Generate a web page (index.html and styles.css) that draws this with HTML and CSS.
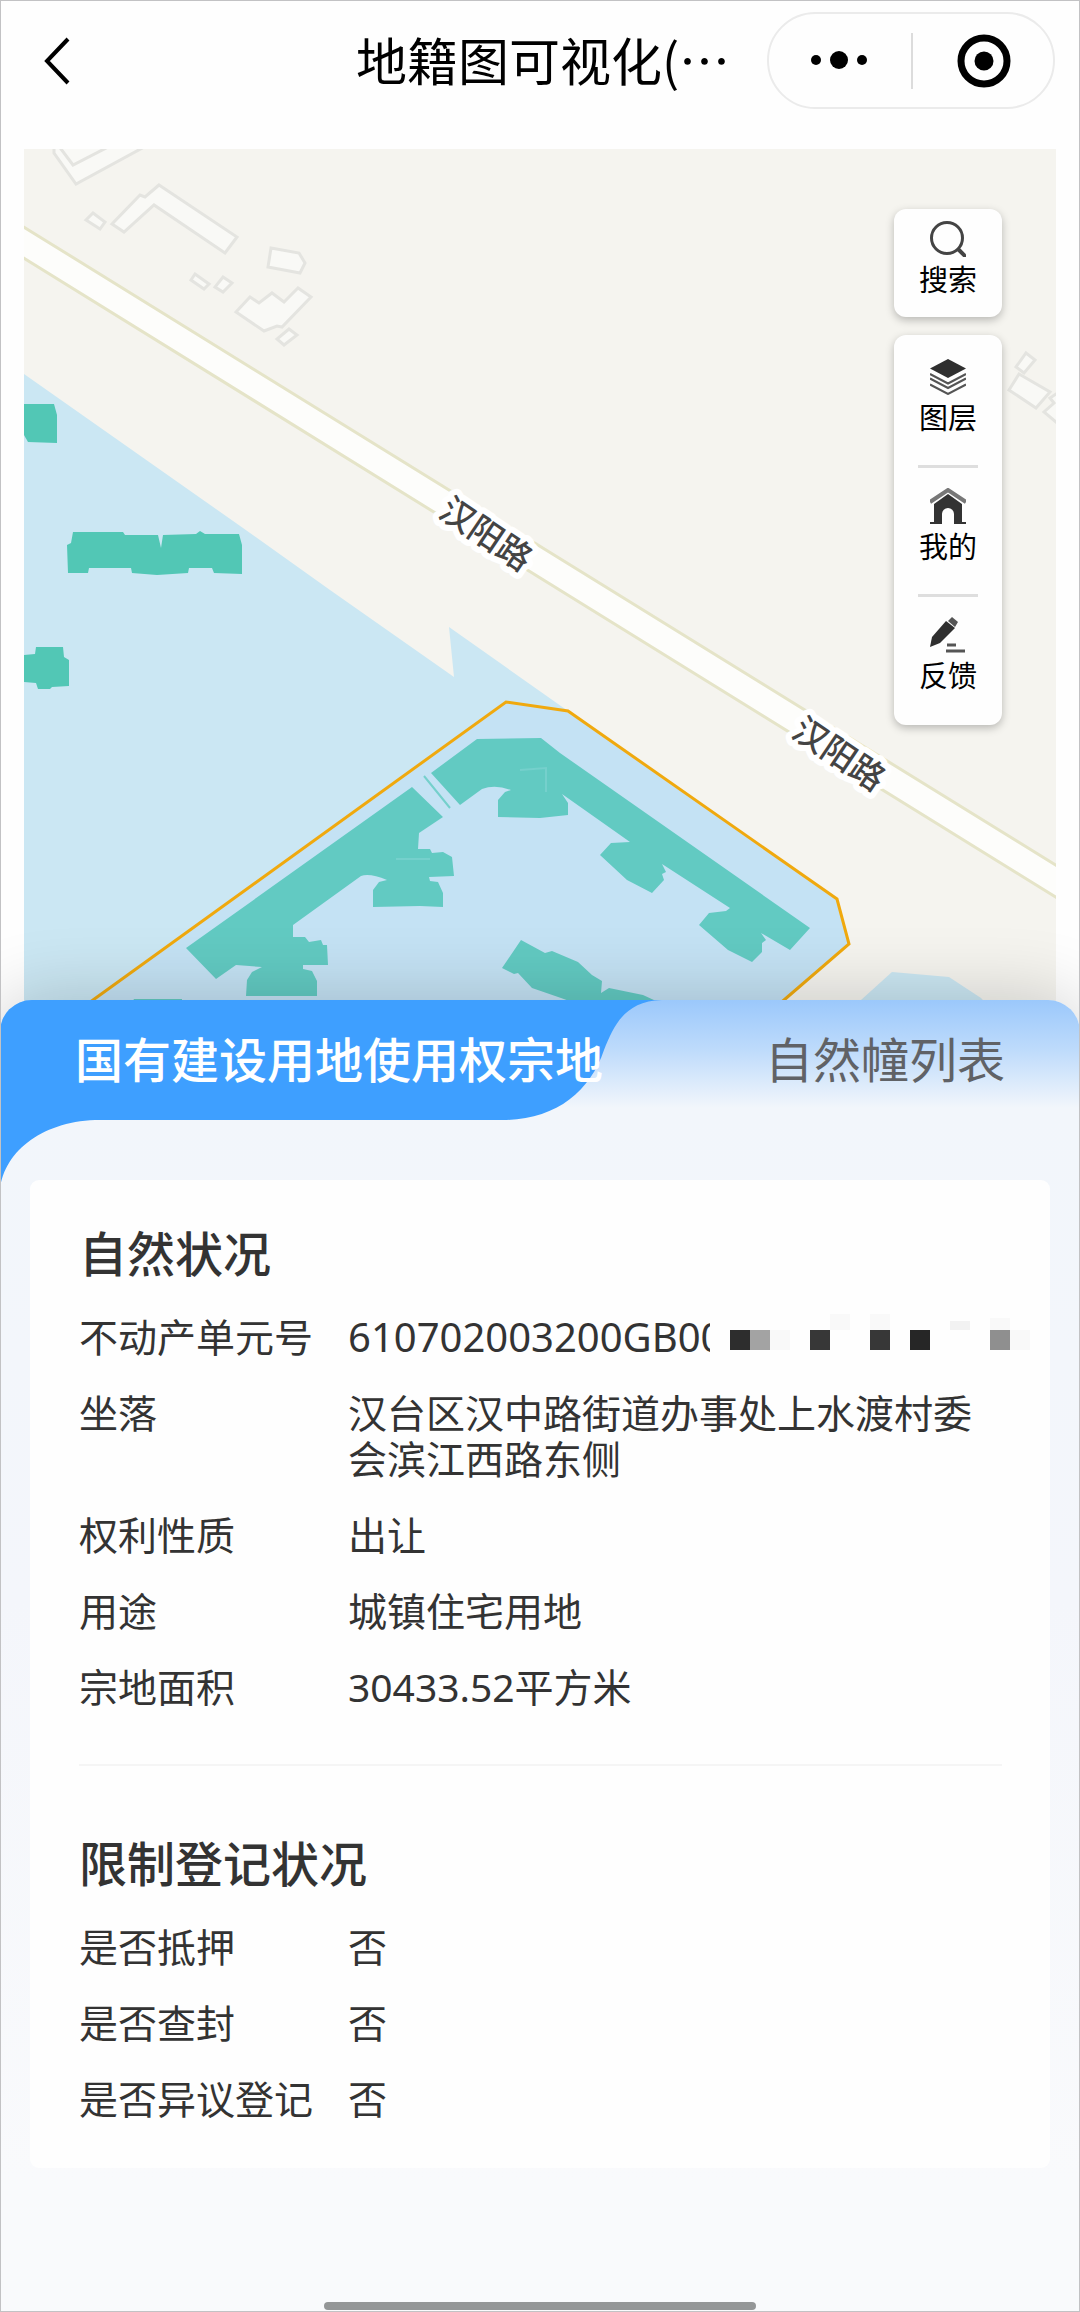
FILE: index.html
```html
<!DOCTYPE html>
<html lang="zh-CN">
<head>
<meta charset="utf-8">
<meta name="viewport" content="width=device-width, initial-scale=1">
<title>地籍图可视化</title>
<link rel="stylesheet" href="styles.css">
</head>
<body>
<div class="app">
  <header class="navbar">
    <button class="back" type="button" aria-label="返回">
      <svg width="28" height="50" viewBox="0 0 28 50"><path d="M25 3 4 25l21 22" fill="none" stroke="#000" stroke-width="4"/></svg>
    </button>
    <h1 class="title">地籍图可视化(…</h1>
    <div class="capsule">
      <button type="button" aria-label="更多">
        <svg width="60" height="60" viewBox="0 0 60 60"><circle cx="6" cy="29" r="5"/><circle cx="29" cy="29" r="9"/><circle cx="52" cy="29" r="5"/></svg>
      </button>
      <button type="button" aria-label="关闭">
        <svg width="60" height="60" viewBox="0 0 60 60"><circle cx="32" cy="30" r="23" fill="none" stroke="#000" stroke-width="7"/><circle cx="32" cy="30" r="9.5"/></svg>
      </button>
    </div>
  </header>

  <main class="content">
    <section class="map" aria-label="地图">
      <svg class="map-canvas" viewBox="24 149 1032 891">
        <rect class="land" x="24" y="149" width="1032" height="891"/>
        <g class="outline">
          <path d="M54 145 54 153 76 184 146 146M58 145 73 165 112 145"/>
          <path d="M159 185 237 237 225 253 154 205 124 232 112 224 140 195 145 197Z"/>
          <path d="M93 213 105 222 100 229 86 220Z"/>
          <path d="M271 248 299 253 305 263 300 273 268 267Z"/>
          <path d="M195 274 209 284 204 289 191 280Z"/>
          <path d="M223 277 232 283 223 292 215 287Z"/>
          <path d="M250 297 259 303 272 293 284 302 298 288 311 297 282 327 277 326 264 331 236 312Z"/>
          <path d="M289 329 297 335 284 345 277 339Z"/>
          <path d="M1026 353 1035 360 1024 373 1016 367Z"/>
          <path d="M1019 374 1050 392 1036 408 1009 390Z"/>
          <path d="M1062 390 1050 398 1054 403 1044 412 1062 427Z"/>
        </g>
        <path class="road" d="M14 221 1070 874V906L14 252Z"/>
        <path class="block" d="M24 374 243 528 330 590 454 677 449 627 568 711 506 702 93 1000 40 1040H24Z"/>
        <path class="block" d="M832 1030 861 1000 892 972 949 977 981 998 1010 1030Z"/>
        <path class="parcel" d="M38 1040 93 1000 506 702 568 711 837 899 849 944 784 1000 738 1040Z"/>
        <g class="building">
          <path d="M24 404H54L57 415V443L28 442 24 435Z"/>
          <path d="M73 532H123L125 535H158L161 548 163 535 196 534 200 531 205 534H239L242 545V574L214 573 212 568H189L188 573 157 575 132 573 131 568H89L88 573H68L67 545 71 543Z"/>
          <path d="M24 655 35 654 36 647H63L64 657 69 660V686L52 687 50 689H38L36 683 24 682Z"/>
        </g>
        <g class="building selected">
          <path d="M412 787 443 817 419 833 418 849H430L432 853 443 852 452 857 454 876 429 877 430 881 438 882 443 893V907L420 906 373 907V890L379 882 387 880 Q370 873 361 876L293 925V937H305L309 942 321 940 323 945H327L328 965H303V969L312 971 317 981V996H246L247 980 252 972 262 967 236 965 216 979 186 948Z"/>
          <path d="M431 773 477 739 541 738 560 753 810 928 790 950 761 933 766 940 762 943V952L752 962 728 950 699 925 709 913 726 911 730 908 662 864 666 872 662 874 664 880 652 893 627 880 600 855 611 843 630 842 562 794 568 803V815L540 818 498 817V800L505 792 511 790 Q495 784 482 789L460 805Z"/>
          <path d="M502 968 521 940 545 953 552 951 578 962 592 975 602 981 601 993 609 988 643 995 680 1012 600 1012 561 998 532 988 518 973 514 974Z"/>
          <path d="M128 1010 134 999H182V1010Z"/>
        </g>
        <path class="crease" d="M520 770 546 768V792M396 859H430M424 776 450 808"/>
        <text class="road-name" transform="translate(486 534) rotate(34)" dy="12">汉阳路</text>
        <text class="road-name" transform="translate(839 754) rotate(34)" dy="12">汉阳路</text>
      </svg>

      <div class="tools">
        <div class="tool-group compact">
          <button class="tool" type="button">
            <svg width="36" height="36" viewBox="0 0 36 36"><circle cx="17" cy="17" r="15.500" fill="none" stroke="#444" stroke-width="3"/><path d="M28 28l8 8" stroke="#444" stroke-width="4"/></svg>
            <span>搜索</span>
          </button>
        </div>
        <div class="tool-group">
          <button class="tool" type="button">
            <svg width="36" height="36" viewBox="0 0 36 36"><path d="M18 0 36 9.500 18 19 0 9.500Z" fill="#2f2f2f"/><path d="M0 15 18 24.500 36 15M0 19.500 18 29 36 19.500M0 25.500 18 35 36 25.500" fill="none" stroke="#555" stroke-width="2"/></svg>
            <span>图层</span>
          </button>
          <button class="tool" type="button">
            <svg width="36" height="36" viewBox="0 0 36 36"><path d="M0 14 18 2 36 14" fill="none" stroke="#777" stroke-width="4"/><path d="M18 6 32 16V34H36V36H24V26a6 6 0 0 0-12 0V36H0V34H4V16Z" fill="#333"/></svg>
            <span>我的</span>
          </button>
          <button class="tool" type="button">
            <svg width="36" height="36" viewBox="0 0 36 36"><path d="M0 30 2 20 16 4 25 11 10 26Z" fill="#2f2f2f"/><path d="M18 4 22 0 28 5 25 10Z" fill="#555"/><path d="M17 28H26M16 34H35" stroke="#555" stroke-width="3"/></svg>
            <span>反馈</span>
          </button>
        </div>
      </div>
    </section>

    <section class="panel">
      <svg class="tab-shape" viewBox="0 0 1080 190" preserveAspectRatio="none" aria-hidden="true">
        <path d="M0 0H662C625 1 614 25 604 50C590 92 555 120 503 120H100C45 120 4 150 0 190Z" fill="#3e9fff"/>
      </svg>
      <div class="tabs" role="tablist">
        <button class="tab active" type="button" role="tab" aria-selected="true">国有建设用地使用权宗地</button>
        <button class="tab" type="button" role="tab" aria-selected="false">自然幢列表</button>
      </div>

      <div class="card">
        <section class="group">
          <h2>自然状况</h2>
          <dl>
            <div class="row"><dt>不动产单元号</dt><dd class="masked"><span class="masked-text">610702003200GB00</span><svg class="mosaic" width="320" height="46" viewBox="0 0 320 46" aria-hidden="true">
              <path fill="#fefefe" d="M0 0h320v46h-320z"/>
              <path fill="#2d2d2d" d="M20 16h20v20h-20z"/>
              <path fill="#a3a3a3" d="M40 16h20v20h-20z"/>
              <path fill="#f9f9f9" d="M60 16h20v20h-20zM300 16h20v20h-20zM120 0h20v16h-20zM160 0h20v16h-20zM280 4h20v12h-20z"/>
              <path fill="#373737" d="M100 16h20v20h-20zM160 16h20v20h-20z"/>
              <path fill="#262626" d="M200 16h20v20h-20z"/>
              <path fill="#f2f2f2" d="M240 7h20v9h-20z"/>
              <path fill="#8f8f8f" d="M280 16h20v20h-20z"/>
            </svg></dd></div>
            <div class="row"><dt>坐落</dt><dd>汉台区汉中路街道办事处上水渡村委会滨江西路东侧</dd></div>
            <div class="row"><dt>权利性质</dt><dd>出让</dd></div>
            <div class="row"><dt>用途</dt><dd>城镇住宅用地</dd></div>
            <div class="row"><dt>宗地面积</dt><dd>30433.52平方米</dd></div>
          </dl>
        </section>
        <section class="group">
          <h2>限制登记状况</h2>
          <dl>
            <div class="row"><dt>是否抵押</dt><dd>否</dd></div>
            <div class="row"><dt>是否查封</dt><dd>否</dd></div>
            <div class="row"><dt>是否异议登记</dt><dd>否</dd></div>
          </dl>
        </section>
      </div>
      <div class="home-indicator"></div>
    </section>
  </main>
</div>
</body>
</html>
```
FILE: styles.css
```css
* {
  box-sizing: border-box;
}

body {
  margin: 0;
  background: #fefefe;
  color: #333;
  font-family: "Noto Sans", "Noto Sans CJK SC", sans-serif;
}

button {
  margin: 0;
  padding: 0;
  border: 0;
  background: none;
  color: inherit;
  font: inherit;
  cursor: pointer;
}

svg {
  display: block;
}

h1, h2, dl, dd {
  margin: 0;
}

.app {
  display: flex;
  flex-direction: column;
  min-height: 100vh;
}

/* thin frame round the whole screen */
.app::after {
  content: "";
  position: absolute;
  inset: 0;
  z-index: 3;
  border: 1px solid #c2c2c4;
  pointer-events: none;
}

/* navigation bar */
.navbar {
  display: grid;
  grid-template-columns: 1fr auto 1fr;
  align-items: center;
  padding: 12px 25px 40px 31px;
}

.navbar .back {
  justify-self: start;
  padding: 0 12px;
}

.title {
  padding-bottom: 4px;
  color: #000;
  font-family: "Noto Sans CJK SC", sans-serif;
  font-size: 51px;
  font-weight: 400;
  line-height: 60px;
}

.capsule {
  justify-self: end;
  display: flex;
  width: 288px;
  height: 97px;
  border: 2px solid #ebebeb;
  border-radius: 49px;
}

.capsule button {
  flex: 1;
  display: grid;
  place-items: center;
  position: relative;
}

.capsule button + button::before {
  content: "";
  position: absolute;
  left: 0;
  width: 2px;
  height: 56px;
  background: #dcdcdc;
}

/* map */
.content {
  flex: 1;
  display: flex;
  flex-direction: column;
}

.map {
  position: relative;
  margin: 0 24px;
}

.map-canvas {
  width: 100%;
  height: auto;
}

.land {
  fill: #f5f4ef;
}

.outline {
  fill: #f9f9f6;
  stroke: #e4e4e0;
  stroke-width: 3;
}

.road {
  fill: #fdfdfb;
  stroke: #e5e4c8;
  stroke-width: 3;
}

.block {
  fill: #cbe7f3;
}

.parcel {
  fill: #c4e2f4;
  stroke: #f0a90e;
  stroke-width: 3;
}

.building {
  fill: #52c7b5;
}

.building.selected {
  fill: #62cac2;
}

.crease {
  fill: none;
  stroke: #75d0cc;
  stroke-width: 2;
}

.road-name {
  fill: #444;
  stroke: #fff;
  stroke-width: 12;
  stroke-linejoin: round;
  paint-order: stroke;
  font-family: "Noto Sans CJK SC", sans-serif;
  font-size: 34px;
  font-weight: 500;
  text-anchor: middle;
}

.tools {
  position: absolute;
  top: 60px;
  right: 54px;
  display: flex;
  flex-direction: column;
  gap: 18px;
}

.tool-group {
  display: flex;
  flex-direction: column;
  align-items: center;
  width: 108px;
  padding: 4px 0 2px;
  border-radius: 12px;
  background: #fefefe;
  box-shadow: 0 3px 9px rgba(0, 0, 0, 0.25);
}

.tool {
  display: flex;
  flex-direction: column;
  align-items: center;
  width: 60px;
  padding: 20px 0 28px;
  color: #000;
  font-family: "Noto Sans CJK SC", sans-serif;
  font-size: 29px;
  line-height: 42px;
}

.compact .tool {
  padding: 8px 0 16px;
}

.tool + .tool {
  border-top: 3px solid #dedede;
}

/* bottom panel */
.panel {
  flex: 1;
  position: relative;
  z-index: 1;
  display: flex;
  flex-direction: column;
  margin-top: -40px;
  border-radius: 32px 32px 0 0;
  background: linear-gradient(#9bc8fb, #bedbfb 50px, #f2f6fb 108px, #f4f6fb 600px, #f9fafc 1180px);
  box-shadow: 0 0 75px rgba(0, 0, 0, 0.2);
}

.tab-shape {
  position: absolute;
  top: 0;
  left: 0;
  width: 100%;
  height: 190px;
  border-radius: 32px 0 0 0;
}

.tabs {
  position: relative;
  display: flex;
  justify-content: space-between;
  height: 120px;
  padding: 0 75px 6px;
}

.tab {
  color: #606266;
  font-family: "Noto Sans CJK SC", sans-serif;
  font-size: 48px;
  line-height: 60px;
}

.tab.active {
  color: #fff;
  font-weight: 500;
}

.card {
  position: relative;
  margin: 60px 30px 0;
  padding: 44px 48px 46px 49px;
  border-radius: 9px;
  background: #fefefe;
}

.group + .group {
  margin-top: 54px;
  padding-top: 68px;
  border-top: 2px solid #f5f5f5;
}

.group h2 {
  margin-bottom: 30px;
  font-size: 48px;
  font-weight: 500;
  line-height: 60px;
}

.group dl {
  display: flex;
  flex-direction: column;
  gap: 30px;
}

.row {
  display: grid;
  grid-template-columns: 269px 1fr;
  font-size: 39px;
  line-height: 46px;
}

/* the end of the number is hidden under the mosaic */
.masked {
  display: flex;
}

.masked-text {
  flex: none;
  width: 362px;
  font-size: 40px;
  white-space: nowrap;
}

.mosaic {
  flex: none;
  position: relative;
}

.home-indicator {
  width: 432px;
  height: 8px;
  margin: auto auto 2px;
  border-radius: 4px;
  background: #949697;
}
```
